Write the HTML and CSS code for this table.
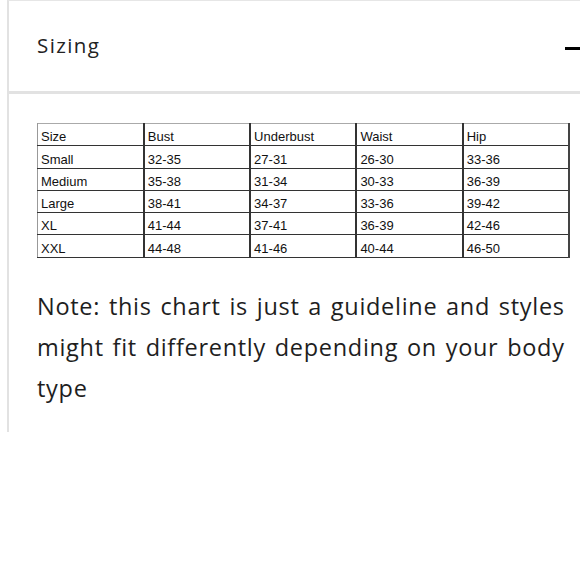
FILE: index.html
```html
<!DOCTYPE html>
<html>
<head>
<meta charset="utf-8">
<link rel="stylesheet" href="styles.css">
</head>
<body>
<div class="accordion">
  <div class="acc-header">
    <span class="acc-title">Sizing</span>
    <span class="acc-toggle"></span>
  </div>
  <div class="acc-body">
    <table class="chart">
      <tr><td>Size</td><td>Bust</td><td>Underbust</td><td>Waist</td><td>Hip</td></tr>
      <tr><td>Small</td><td>32-35</td><td>27-31</td><td>26-30</td><td>33-36</td></tr>
      <tr><td>Medium</td><td>35-38</td><td>31-34</td><td>30-33</td><td>36-39</td></tr>
      <tr><td>Large</td><td>38-41</td><td>34-37</td><td>33-36</td><td>39-42</td></tr>
      <tr><td>XL</td><td>41-44</td><td>37-41</td><td>36-39</td><td>42-46</td></tr>
      <tr><td>XXL</td><td>44-48</td><td>41-46</td><td>40-44</td><td>46-50</td></tr>
    </table>
    <p class="note">Note: this chart is just a guideline and styles might fit differently depending on your body type</p>
  </div>
</div>
</body>
</html>
```
FILE: styles.css
```css
html, body {
  margin: 0;
  padding: 0;
  background: #fff;
}
.accordion {
  margin-left: 7px;
  width: 573px;
  border-left: 2px solid #e2e2e2;
  border-top: 1px solid #e6e6e6;
  font-family: "Open Sans", Lato, sans-serif;
  color: #222;
}
.acc-header {
  height: 93px;
  display: flex;
  align-items: center;
  justify-content: space-between;
  padding: 0 2px 0 28px;
  border-bottom: 3px solid #e2e2e2;
  box-sizing: border-box;
}
.acc-title {
  font-size: 20.5px;
  letter-spacing: 1.4px;
  margin-top: -3px;
}
.acc-toggle {
  width: 15px;
  height: 3px;
  background: #000;
  margin-top: 4px;
}
.acc-body {
  padding: 29px 0 36px 28px;
  height: 338px;
  box-sizing: border-box;
}
.chart {
  border-collapse: collapse;
  width: 533px;
  font-family: "Liberation Sans", Arial, sans-serif;
  font-size: 13px;
  color: #111;
  border-top: 1px solid #aaa;
}
.chart td {
  width: 20%;
  height: 20.3px;
  padding: 0 0 1px 3px;
  border-left: 2px solid #333;
  border-bottom: 1.5px solid #333;
  line-height: 14px;
  vertical-align: bottom;
}
.chart td:first-child {
  border-left: 1px solid #999;
}
.chart td:last-child {
  border-right: 2px solid #444;
}
.note {
  margin: 28px 0 0;
  font-size: 23.5px;
  letter-spacing: 0.7px;
  word-spacing: 2px;
  line-height: 41px;
  color: #1e1e1e;
  width: 540px;
}
```
